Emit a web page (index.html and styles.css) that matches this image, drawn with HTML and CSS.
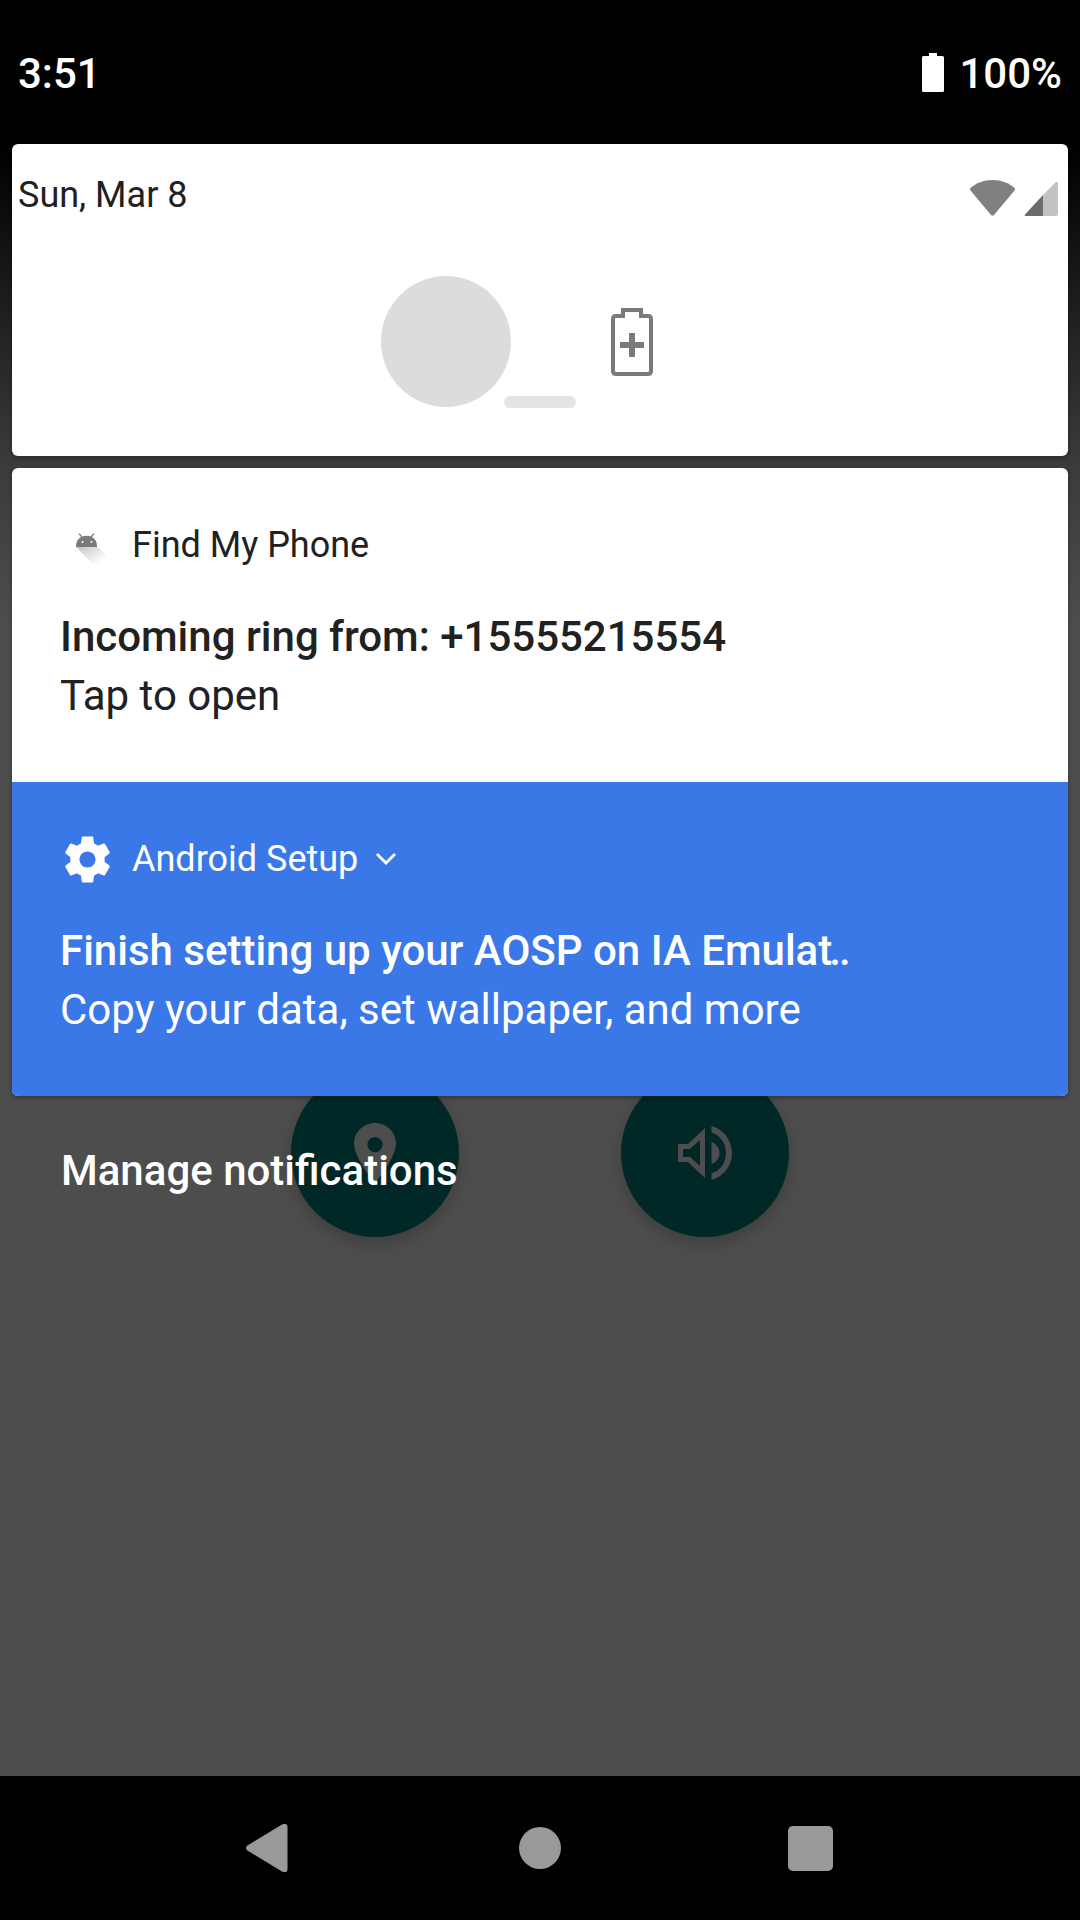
FILE: index.html
```html
<!DOCTYPE html>
<html>
<head>
    <title>Notification Shade</title>
    <link rel="stylesheet" href="styles.css">
</head>
<body>
<div class="screen">
    <!-- Status bar -->
    <div class="status-bar">
        <span class="clock">3:51</span>
        <div class="status-right">
            <svg class="battery-solid" viewBox="0 0 22 39"><path d="M7 0h8v3h5.500q1.500 0 1.500 1.500v33q0 1.500-1.500 1.500h-19q-1.500 0-1.500-1.500v-33q0-1.500 1.500-1.500h5.500z" fill="#fff"/></svg>
            <span class="percent">100%</span>
        </div>
    </div>

    <!-- Shade area -->
    <div class="shade">
        <div class="quick-buttons">
            <div class="round-btn">
                <svg viewBox="0 0 42 60" class="pin"><path fill-rule="evenodd" d="M21 0C9.400 0 0 9.100 0 20.300 0 35.500 21 60 21 60s21-24.500 21-39.700C42 9.100 32.600 0 21 0zm0 14a7.600 7.600 0 1 1 0 15.200 7.600 7.600 0 0 1 0-15.200z" fill="#4d4d4d"/></svg>
            </div>
            <div class="round-btn">
                <svg viewBox="0 0 54 54" class="speaker"><path fill-rule="evenodd" d="M0 18h10L27 2v50L10 36H0zm5 5v8h7l10 9V14l-10 9zM33.500 0C45 3 54 14 54 27S45 51 33.500 54v-6.500C42 45 48 37 48 27S42 9 33.500 6.500zm0 16c5 2 8 6 8 11s-3 9-8 11z" fill="#4d4d4d"/></svg>
            </div>
        </div>

        <div class="card header-card">
            <div class="header-top">
                <span class="date">Sun, Mar 8</span>
                <div class="signal-icons">
                    <svg class="wifi" viewBox="0 0 46 36"><path d="M23 0C14 0 6.500 3 1 8q-1 1 0 2.500l20.500 24.500q1.500 1.500 3 0L45 10.500q1-1.500 0-2.500C39.500 3 32 0 23 0z" fill="#808080"/></svg>
                    <svg class="cell" viewBox="0 0 34 34"><path d="M19 13v21H2q-2 0-1-1.500z" fill="#6b6b6b"/><path d="M19 13L32 0q2-1 2 1v31q0 2-2 2H19z" fill="#c2c2c2"/></svg>
                </div>
            </div>
            <div class="charging-row">
                <div class="avatar"></div>
                <div class="dash"></div>
                <svg class="battery-plus" viewBox="0 0 42 68"><path fill="none" stroke="#7a7a7a" stroke-width="4" d="M12 2h18v6h7q3 0 3 3v52q0 3-3 3H5q-3 0-3-3V11q0-3 3-3h7z"/><path fill="#7a7a7a" d="M18 25h6v9h9v6h-9v9h-6v-9H9v-6h9z"/></svg>
            </div>
        </div>

        <div class="card notifications">
            <div class="notif">
                <div class="notif-head">
                    <svg class="android-icon" viewBox="0 0 48 48">
                        <defs>
                            <linearGradient id="droidShadow" x1="0" y1="0" x2="1" y2="1">
                                <stop offset="0" stop-color="#c4c4c4"/>
                                <stop offset="0.8" stop-color="#ffffff"/>
                            </linearGradient>
                        </defs>
                        <path d="M14 30H36L46 40V48H32z" fill="url(#droidShadow)"/>
                        <path fill-rule="evenodd" d="M14 30v-1q0-6 5-9l-2.500-3 1-.8 3 3.200q4-1.500 8 0l3-3.200 1 .8-2.500 3q5 3 5 9v1zM20.500 24a1 1 0 1 0 0 2 1 1 0 0 0 0-2zm9 0a1 1 0 1 0 0 2 1 1 0 0 0 0-2z" fill="#7a7a7a"/>
                    </svg>
                    <span class="app-name">Find My Phone</span>
                </div>
                <div class="notif-title">Incoming ring from: +15555215554</div>
                <div class="notif-text">Tap to open</div>
            </div>
            <div class="notif notif-blue">
                <div class="notif-head">
                    <svg class="gear-icon" viewBox="0 0 24 24"><path d="M19.430 12.980c.04-.32.070-.64.070-.98s-.03-.66-.07-.98l2.110-1.650c.19-.15.24-.42.120-.64l-2-3.460c-.12-.22-.39-.3-.61-.22l-2.490 1c-.52-.4-1.080-.73-1.690-.98l-.38-2.650C14.460 2.180 14.250 2 14 2h-4c-.25 0-.46.18-.49.420l-.38 2.650c-.61.25-1.170.59-1.690.98l-2.490-1c-.23-.09-.49 0-.61.22l-2 3.460c-.13.22-.07.49.12.64l2.110 1.650c-.04.32-.07.65-.07.98s.03.66.07.98l-2.110 1.650c-.19.15-.24.42-.12.64l2 3.460c.12.22.39.3.61.22l2.490-1c.52.4 1.080.73 1.690.98l.38 2.650c.03.24.24.42.49.42h4c.25 0 .46-.18.49-.42l.38-2.650c.61-.25 1.170-.59 1.690-.98l2.490 1c.23.09.49 0 .61-.22l2-3.460c.12-.22.07-.49-.12-.64l-2.110-1.650zM12 15.500c-1.930 0-3.500-1.570-3.500-3.500s1.570-3.500 3.500-3.500 3.500 1.570 3.500 3.500-1.570 3.500-3.500 3.500z" fill="#fff"/></svg>
                    <span class="app-name">Android Setup</span>
                    <svg class="chevron" viewBox="0 0 22 14"><path d="M2 2l9 9 9-9" fill="none" stroke="#fff" stroke-width="2.800"/></svg>
                </div>
                <div class="notif-title">Finish setting up your AOSP on IA Emulat<span class="dots">..</span></div>
                <div class="notif-text">Copy your data, set wallpaper, and more</div>
            </div>
        </div>

        <div class="manage">Manage notifications</div>
    </div>

    <!-- Nav bar -->
    <div class="nav-bar">
        <svg class="nav-back" viewBox="0 0 42 48"><path d="M1.500 21.500L36 .5q5-2 5.500 2v43q-.5 4-5.500 2L1.500 26.500q-3-2.500 0-5z" fill="#999"/></svg>
        <div class="nav-home"></div>
        <div class="nav-recent"></div>
    </div>
</div>
</body>
</html>
```

FILE: styles.css
```css
body {
    margin: 0;
    background: #000;
    font-family: Roboto, "Liberation Sans", sans-serif;
}

.screen {
    width: 1080px;
    height: 1920px;
    display: flex;
    flex-direction: column;
    overflow: hidden;
}

.status-bar {
    height: 144px;
    flex-shrink: 0;
    background: #000;
    color: #fff;
    display: flex;
    justify-content: space-between;
    align-items: center;
    box-sizing: border-box;
    padding: 0 18px;
    font-size: 42px;
    font-weight: 500;
}

.clock,
.percent {
    margin-top: 2px;
}

.status-right {
    display: flex;
    align-items: center;
    gap: 15px;
}

.battery-solid {
    width: 22px;
    height: 39px;
}

/* shade */
.shade {
    flex: 1;
    position: relative;
    background: linear-gradient(to bottom, #000 0, #3b3b3b 320px, #4d4d4d 480px);
    padding: 0 12px;
}

.quick-buttons {
    position: absolute;
    top: 925px;
    left: 291px;
    display: flex;
    gap: 162px;
}

.round-btn {
    width: 168px;
    height: 168px;
    border-radius: 50%;
    background: #002826;
    box-shadow: 0 6px 16px rgba(0, 0, 0, 0.2);
    display: flex;
    align-items: center;
    justify-content: center;
}

.pin {
    width: 42px;
    height: 60px;
}

.speaker {
    width: 54px;
    height: 54px;
}

.card {
    position: relative;
    background: #fff;
    border-radius: 6px;
    box-shadow: 0 2px 5px rgba(0, 0, 0, 0.3);
}

.header-card {
    height: 312px;
    margin-bottom: 12px;
    box-sizing: border-box;
    padding: 0 10px 0 6px;
}

.header-top {
    display: flex;
    justify-content: space-between;
    padding-top: 30px;
}

.date {
    font-size: 36px;
    line-height: 42px;
    color: #212121;
}

.signal-icons {
    display: flex;
    align-items: flex-end;
    gap: 8px;
    padding-top: 3px;
}

.wifi {
    width: 47px;
    height: 36px;
}

.cell {
    width: 34px;
    height: 34px;
}

.charging-row {
    position: relative;
    display: flex;
    margin: 60px 0 0 363px;
}

.avatar {
    width: 130px;
    height: 131px;
    border-radius: 50%;
    background: #dcdcdc;
}

.dash {
    width: 72px;
    height: 12px;
    margin: 120px 0 0 -7px;
    border-radius: 6px;
    background: #e4e4e4;
}

.battery-plus {
    width: 42px;
    height: 68px;
    margin: 32px 0 0 35px;
}

.notifications {
    overflow: hidden;
}

.notif {
    height: 314px;
    box-sizing: border-box;
    padding: 0 37px 0 48px;
    color: #212121;
}

.notif-blue {
    background: #3b78e7;
    color: #fff;
}

.notif-head {
    display: flex;
    align-items: center;
    height: 44px;
    padding-top: 55px;
}

.android-icon {
    width: 48px;
    height: 48px;
    margin: 0 22px 8px 2px;
}

.gear-icon {
    width: 55px;
    height: 55px;
    margin-right: 17px;
}

.app-name {
    font-size: 36px;
}

.chevron {
    width: 22px;
    height: 14px;
    margin-left: 17px;
}

.notif-title {
    margin-top: 44px;
    font-size: 42px;
    line-height: 52px;
    font-weight: 500;
    white-space: nowrap;
}

.dots {
    margin-left: -3px;
    letter-spacing: -2px;
}

.notif-text {
    margin-top: 7px;
    font-size: 42px;
    line-height: 52px;
    white-space: nowrap;
}

.manage {
    position: relative;
    margin: 49px 0 0 49px;
    font-size: 42px;
    line-height: 52px;
    font-weight: 500;
    color: #fff;
}

.nav-bar {
    height: 144px;
    flex-shrink: 0;
    box-sizing: border-box;
    padding-right: 1px;
    background: #000;
    display: flex;
    align-items: center;
    justify-content: center;
}

.nav-back {
    width: 42px;
    height: 48px;
}

.nav-home {
    width: 42px;
    height: 42px;
    margin: 0 227px 0 231px;
    border-radius: 50%;
    background: #999;
}

.nav-recent {
    width: 45px;
    height: 45px;
    border-radius: 5px;
    background: #999;
}
```
